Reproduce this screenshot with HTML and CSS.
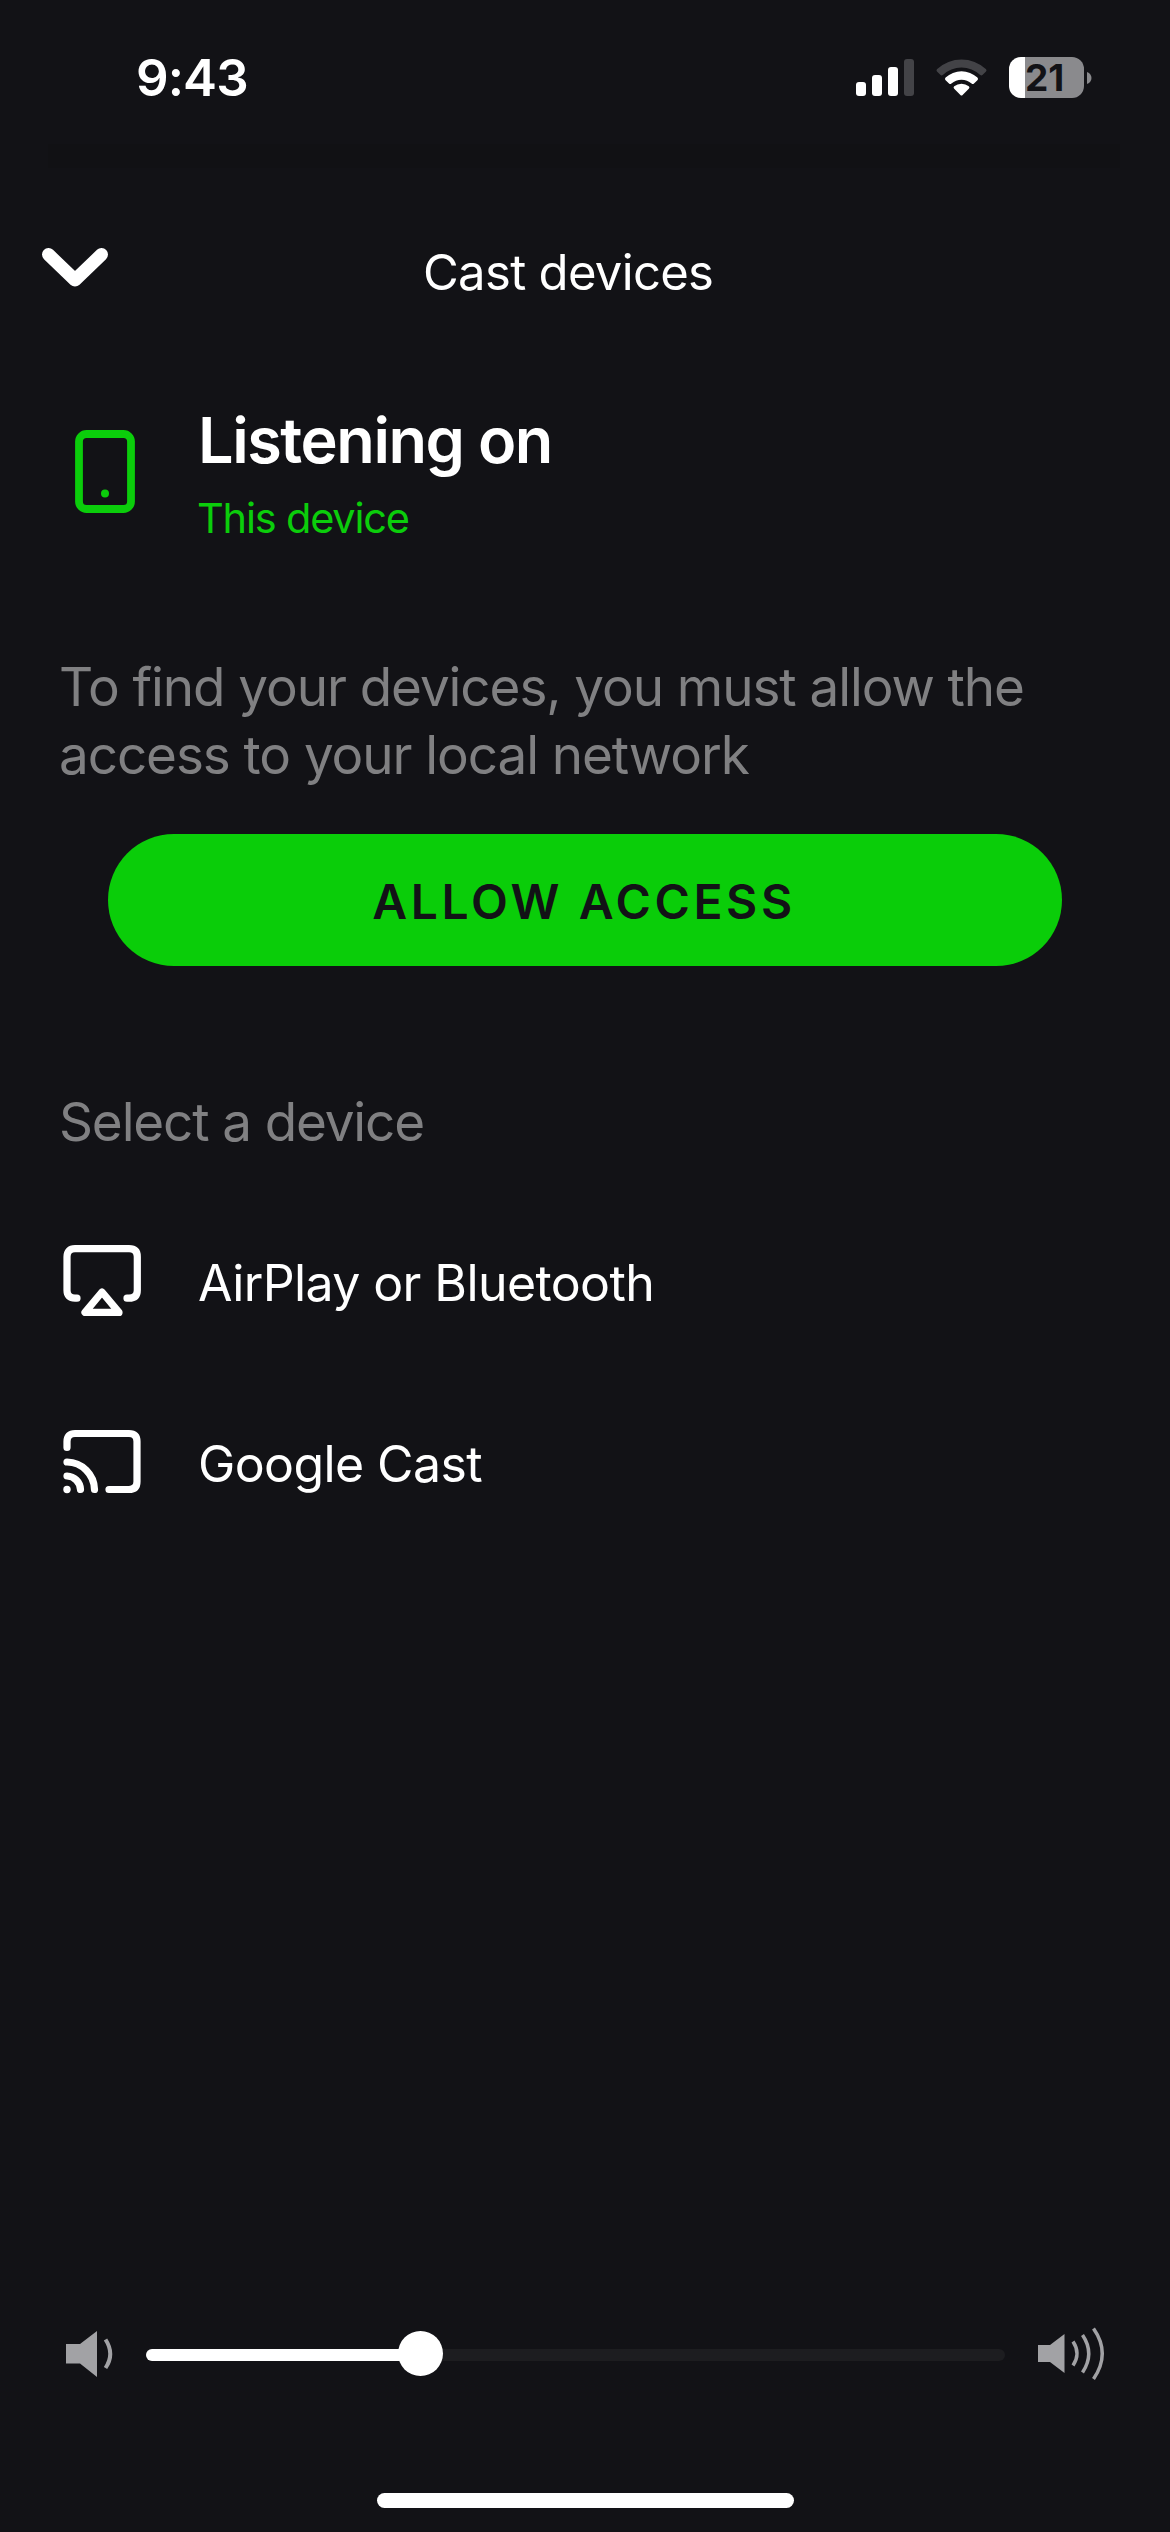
FILE: index.html
```html
<!DOCTYPE html>
<html lang="en">
<head>
<meta charset="utf-8">
<title>Cast devices</title>
<link rel="stylesheet" href="styles.css">
</head>
<body>
<div class="screen">
  <div class="status-bar">
    <span class="time">9:43</span>
    <svg class="signal" width="58" height="37" viewBox="0 0 58 37">
      <g fill="#fff">
        <rect x="0" y="23" width="10" height="14" rx="3"/>
        <rect x="16" y="16" width="10" height="21" rx="3"/>
        <rect x="32" y="8" width="10" height="29" rx="3"/>
      </g>
      <rect x="48" y="0" width="10" height="37" rx="3" fill="#434347"/>
    </svg>
    <svg class="wifi" width="51" height="37" viewBox="0 0 51 37">
      <path d="M1.2 9.9 Q-.2 11.3 1.2 12.7 L4.6 16 Q5.6 16.8 6.8 15.9 A27.5 27.5 0 0 1 44.2 15.9 Q45.4 16.8 46.4 16 L49.8 12.7 Q51.2 11.3 49.8 9.9 A36 36 0 0 0 1.2 9.9Z" fill="#434347"/>
      <path d="M9.6 18.5 Q8.2 19.9 9.6 21.3 L13 24.6 Q14.2 25.6 15.4 24.6 A15 15 0 0 1 35.6 24.6 Q36.8 25.6 38 24.6 L41.4 21.3 Q42.8 19.9 41.4 18.5 A23.5 23.5 0 0 0 9.6 18.5Z" fill="#fff"/>
      <path d="M18.2 27.3 Q17 28.6 18.2 29.8 L24.4 36.1 Q25.5 37.1 26.6 36.1 L32.8 29.8 Q34 28.6 32.8 27.3 A11.4 11.4 0 0 0 18.2 27.3Z" fill="#fff"/>
    </svg>
    <div class="battery">21</div>
    <svg class="battery-tip" width="5" height="12" viewBox="0 0 5 12"><path d="M0 0 C6 2 6 10 0 12Z" fill="#8a8a8d"/></svg>
  </div>
  <div class="strip"></div>

  <header class="header">
    <svg class="chevron" width="66" height="40" viewBox="0 0 66 40"><path d="M6.5 6.5 L33 32 L59.500 6.500" fill="none" stroke="#fff" stroke-width="13" stroke-linecap="round" stroke-linejoin="round"/></svg>
    <h1 class="title">Cast devices</h1>
  </header>

  <section class="current">
    <svg class="phone" width="60" height="84" viewBox="0 0 60 84">
      <rect x="4" y="4" width="52" height="75" rx="7.500" fill="none" stroke="#0bcd0b" stroke-width="7.800"/>
      <circle cx="30" cy="63.500" r="4" fill="#0bcd0b"/>
    </svg>
    <div class="current-text">
      <h2 class="current-title">Listening on</h2>
      <div class="current-device">This device</div>
    </div>
  </section>

  <p class="notice">To find your devices, you must allow the<br>access to your local network</p>
  <button class="allow">ALLOW ACCESS</button>

  <h3 class="select">Select a device</h3>
  <div class="devices">
    <div class="device">
      <svg width="78" height="100" viewBox="0 0 78 100" fill="none" stroke="#fff" stroke-width="7.200" stroke-linecap="round" stroke-linejoin="round">
        <path d="M14 66.200 H12 Q4 66.200 4 58.200 V24.700 Q4 16.700 12 16.700 H66 Q74.300 16.700 74.300 24.700 V58.200 Q74.300 66.200 66 66.200 H64"/>
        <path d="M39 60 L22 80.400 H56Z"/>
      </svg>
      <span class="device-name">AirPlay or Bluetooth</span>
    </div>
    <div class="device">
      <svg width="78" height="100" viewBox="0 0 78 100" fill="none" stroke="#fff" stroke-width="7.200" stroke-linecap="round" stroke-linejoin="round">
        <path d="M4 34.500 V28.500 Q4 20.500 12 20.500 H66 Q74 20.500 74 28.500 V68.500 Q74 76.500 66 76.500 H46"/>
        <path d="M4 49 A28 28 0 0 1 31.500 76.500"/>
        <path d="M4 63 A14 14 0 0 1 17.500 76.500"/>
        <circle cx="4" cy="76.500" r="3.700" fill="#fff" stroke="none"/>
      </svg>
      <span class="device-name">Google Cast</span>
    </div>
  </div>

  <div class="volume">
    <svg width="48" height="50" viewBox="0 0 48 50">
      <path d="M0 15 H14 L31 2 V48 L14 34.500 H0Z" fill="#a2a2a5"/>
      <path d="M39.500 10.500 Q49 25 39.500 39" fill="none" stroke="#a2a2a5" stroke-width="4"/>
    </svg>
    <div class="track">
      <div class="fill"></div>
      <div class="knob"></div>
    </div>
    <svg width="68" height="54" viewBox="0 0 68 54">
      <path d="M0 18 H12 L26.500 7 V46 L12 35 H0Z" fill="#a2a2a5"/>
      <g fill="none" stroke="#a2a2a5" stroke-width="3.500">
        <path d="M35 14.500 Q43 26.500 35 38.500"/>
        <path d="M44.500 8 Q57 26.500 44.500 45.500"/>
        <path d="M55.500 1.500 Q73 26.500 55.500 52"/>
      </g>
    </svg>
  </div>
  <div class="home"></div>
</div>
</body>
</html>
```
FILE: styles.css
```css
* { box-sizing: border-box; }
body {
  margin: 0;
  background: #121216;
  color: #fff;
  font-family: Inter, "Liberation Sans", sans-serif;
}
h1, h2, h3, p { margin: 0; font-weight: 430; }
svg { display: block; flex: none; }

.screen {
  width: 1170px;
  height: 2532px;
  display: flex;
  flex-direction: column;
  padding-bottom: 24px;
}

.status-bar {
  height: 142px;
  padding: 13px 0 0 136px;
  display: flex;
  align-items: center;
}
.time {
  width: 720px;
  font-size: 51px;
  font-weight: 600;
  line-height: 62px;
  letter-spacing: -0.9px;
}
.wifi { margin-left: 22px; }
.battery {
  width: 75px;
  height: 41px;
  margin-left: 22px;
  padding-left: 16px;
  border-radius: 12px;
  background: linear-gradient(to right, #fff 16px, #8a8a8d 16px);
  color: #121216;
  font-size: 37px;
  font-weight: 700;
  line-height: 41px;
}
.battery-tip { margin-left: 3px; }

.strip {
  height: 24px;
  margin: 2px 50px 0 48px;
  background: #111114;
}

.header {
  height: 100px;
  margin-top: 54px;
  padding-left: 42px;
  display: flex;
  align-items: center;
}
.chevron { margin-bottom: 9px; }
.title {
  margin-left: 315px;
  padding-top: 2px;
  font-size: 49px;
  line-height: 60px;
  letter-spacing: -0.68px;
}

.current {
  margin-top: 80px;
  padding-left: 75px;
  display: flex;
  gap: 62px;
}
.phone { margin-top: 28px; }
.current-title {
  padding-left: 1px;
  font-size: 63px;
  font-weight: 600;
  line-height: 76px;
  letter-spacing: -1.45px;
}
.current-device {
  margin-top: 15px;
  color: #0bcd0b;
  font-size: 41.5px;
  line-height: 50px;
  letter-spacing: -1.2px;
}

.notice {
  margin: 110px 0 0 59px;
  color: #808082;
  font-size: 53px;
  line-height: 68px;
  letter-spacing: -1.07px;
}

.allow {
  height: 132px;
  margin: 45px 108px 0;
  padding: 3px 2px 0 0;
  border: 0;
  border-radius: 66px;
  background: #0acd09;
  color: #121216;
  font: 560 48px/60px Inter, "Liberation Sans", sans-serif;
  letter-spacing: 3.6px;
}

.select {
  margin: 122px 0 0 59px;
  color: #808082;
  font-size: 53px;
  line-height: 68px;
  letter-spacing: -1.13px;
}

.devices {
  margin: 76px 0 0 63px;
  display: flex;
  flex-direction: column;
  gap: 81px;
}
.device {
  height: 100px;
  display: flex;
  align-items: center;
  gap: 57px;
}
.device-name {
  padding-top: 2px;
  font-size: 50px;
  font-weight: 430;
  line-height: 62px;
  letter-spacing: -0.6px;
}

.volume {
  height: 54px;
  margin: auto 0 112px 66px;
  display: flex;
  align-items: center;
}
.track {
  position: relative;
  width: 859px;
  height: 12px;
  margin: 2px 33px 0 32px;
  border-radius: 6px;
  background: #1d1d20;
}
.fill {
  width: 275px;
  height: 12px;
  border-radius: 6px;
  background: #fff;
}
.knob {
  position: absolute;
  left: 252px;
  top: -18px;
  width: 45px;
  height: 45px;
  border-radius: 50%;
  background: #fff;
}

.home {
  width: 417px;
  height: 15px;
  margin-left: 377px;
  border-radius: 8px;
  background: #fff;
}
```
